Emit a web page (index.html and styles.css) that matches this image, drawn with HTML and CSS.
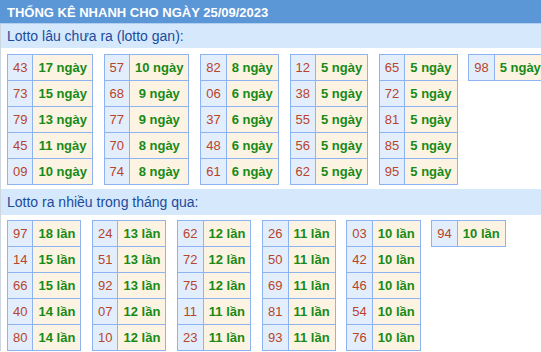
FILE: index.html
```html
<!DOCTYPE html>
<html lang="vi">
<head>
<meta charset="utf-8">
<title>Thống kê nhanh</title>
<link rel="stylesheet" href="styles.css">
</head>
<body>
<div class="page">
  <div class="header">THỐNG KÊ NHANH CHO NGÀY 25/09/2023</div>
  <div class="content">
    <div class="bar bar-first">Lotto lâu chưa ra (lotto gan):</div>
    <div class="groups groups-first">
      <table class="stat">
        <tr><td class="num">43</td><td class="val">17 ngày</td></tr>
        <tr><td class="num">73</td><td class="val">15 ngày</td></tr>
        <tr><td class="num">79</td><td class="val">13 ngày</td></tr>
        <tr><td class="num">45</td><td class="val">11 ngày</td></tr>
        <tr><td class="num">09</td><td class="val">10 ngày</td></tr>
      </table>
      <table class="stat">
        <tr><td class="num">57</td><td class="val">10 ngày</td></tr>
        <tr><td class="num">68</td><td class="val">9 ngày</td></tr>
        <tr><td class="num">77</td><td class="val">9 ngày</td></tr>
        <tr><td class="num">70</td><td class="val">8 ngày</td></tr>
        <tr><td class="num">74</td><td class="val">8 ngày</td></tr>
      </table>
      <table class="stat">
        <tr><td class="num">82</td><td class="val">8 ngày</td></tr>
        <tr><td class="num">06</td><td class="val">6 ngày</td></tr>
        <tr><td class="num">37</td><td class="val">6 ngày</td></tr>
        <tr><td class="num">48</td><td class="val">6 ngày</td></tr>
        <tr><td class="num">61</td><td class="val">6 ngày</td></tr>
      </table>
      <table class="stat">
        <tr><td class="num">12</td><td class="val">5 ngày</td></tr>
        <tr><td class="num">38</td><td class="val">5 ngày</td></tr>
        <tr><td class="num">55</td><td class="val">5 ngày</td></tr>
        <tr><td class="num">56</td><td class="val">5 ngày</td></tr>
        <tr><td class="num">62</td><td class="val">5 ngày</td></tr>
      </table>
      <table class="stat">
        <tr><td class="num">65</td><td class="val">5 ngày</td></tr>
        <tr><td class="num">72</td><td class="val">5 ngày</td></tr>
        <tr><td class="num">81</td><td class="val">5 ngày</td></tr>
        <tr><td class="num">85</td><td class="val">5 ngày</td></tr>
        <tr><td class="num">95</td><td class="val">5 ngày</td></tr>
      </table>
      <table class="stat">
        <tr><td class="num">98</td><td class="val">5 ngày</td></tr>
      </table>
    </div>
    <div class="bar bar-second">Lotto ra nhiều trong tháng qua:</div>
    <div class="groups groups-second">
      <table class="stat">
        <tr><td class="num">97</td><td class="val">18 lần</td></tr>
        <tr><td class="num">14</td><td class="val">15 lần</td></tr>
        <tr><td class="num">66</td><td class="val">15 lần</td></tr>
        <tr><td class="num">40</td><td class="val">14 lần</td></tr>
        <tr><td class="num">80</td><td class="val">14 lần</td></tr>
      </table>
      <table class="stat">
        <tr><td class="num">24</td><td class="val">13 lần</td></tr>
        <tr><td class="num">51</td><td class="val">13 lần</td></tr>
        <tr><td class="num">92</td><td class="val">13 lần</td></tr>
        <tr><td class="num">07</td><td class="val">12 lần</td></tr>
        <tr><td class="num">10</td><td class="val">12 lần</td></tr>
      </table>
      <table class="stat">
        <tr><td class="num">62</td><td class="val">12 lần</td></tr>
        <tr><td class="num">72</td><td class="val">12 lần</td></tr>
        <tr><td class="num">75</td><td class="val">12 lần</td></tr>
        <tr><td class="num">11</td><td class="val">11 lần</td></tr>
        <tr><td class="num">23</td><td class="val">11 lần</td></tr>
      </table>
      <table class="stat">
        <tr><td class="num">26</td><td class="val">11 lần</td></tr>
        <tr><td class="num">50</td><td class="val">11 lần</td></tr>
        <tr><td class="num">69</td><td class="val">11 lần</td></tr>
        <tr><td class="num">81</td><td class="val">11 lần</td></tr>
        <tr><td class="num">93</td><td class="val">11 lần</td></tr>
      </table>
      <table class="stat">
        <tr><td class="num">03</td><td class="val">10 lần</td></tr>
        <tr><td class="num">42</td><td class="val">10 lần</td></tr>
        <tr><td class="num">46</td><td class="val">10 lần</td></tr>
        <tr><td class="num">54</td><td class="val">10 lần</td></tr>
        <tr><td class="num">76</td><td class="val">10 lần</td></tr>
      </table>
      <table class="stat">
        <tr><td class="num">94</td><td class="val">10 lần</td></tr>
      </table>
    </div>
  </div>
</div>
</body>
</html>
```

FILE: styles.css
```css
html, body {
  margin: 0;
  padding: 0;
  overflow: hidden;
  background: #ffffff;
}

body {
  font-family: "Liberation Sans", Arial, sans-serif;
}

.page {
  width: 541px;
  height: 352px;
  overflow: hidden;
}

.header {
  height: 23px;
  box-sizing: border-box;
  padding: 1px 0 0 7px;
  line-height: 23px;
  background: #5b96d6;
  border-bottom: 1px solid #b3cff0;
  color: #ffffff;
  font-size: 13px;
  font-weight: bold;
  white-space: nowrap;
  height: 24px;
}

.content {
  border-left: 1px solid #cdd5df;
}

.bar {
  background: #d5e8fc;
  color: #1b4c9c;
  font-size: 14px;
  padding-left: 6px;
  white-space: nowrap;
}

.bar-first {
  height: 24px;
  line-height: 24px;
}

.bar-second {
  height: 26px;
  line-height: 26px;
  margin-top: 4px;
}

.groups {
  display: flex;
  align-items: flex-start;
  gap: 10.7px;
  padding-left: 6px;
  white-space: nowrap;
}

.groups-first {
  padding-top: 6px;
}

.groups-second {
  padding-top: 5px;
}

.stat {
  flex: none;
  border-collapse: collapse;
  font-size: 13px;
}

.stat td {
  border: 1px solid #8db3f0;
  line-height: 25px;
  padding: 0 5px;
  text-align: center;
}

.num {
  background: #e2eefc;
  color: #b8442a;
}

.val {
  background: #fdf3e2;
  color: #178a17;
  font-weight: bold;
}
```
